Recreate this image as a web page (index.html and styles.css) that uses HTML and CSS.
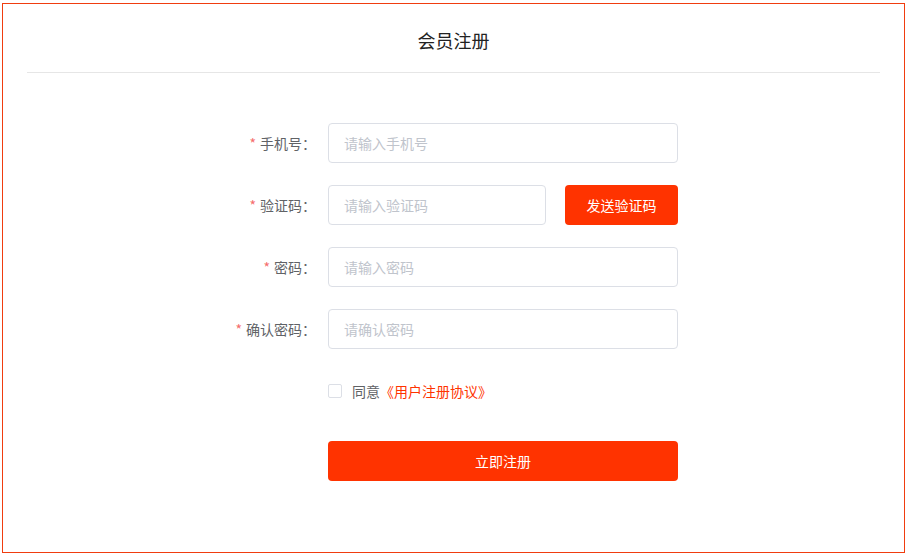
FILE: index.html
```html
<!DOCTYPE html>
<html lang="zh-CN">
<head>
  <meta charset="UTF-8">
  <title>会员注册</title>
  <link rel="stylesheet" href="styles.css">
</head>
<body>

  <div class="register-box">
    <div class="register-head">
      <h2>会员注册</h2>
    </div>

    <form class="reg-form" id="regForm">
      <div class="form-item">
        <label class="form-label required" for="phone">手机号：</label>
        <div class="form-content">
          <input class="form-input" type="text" id="phone" placeholder="请输入手机号">
        </div>
      </div>

      <div class="form-item">
        <label class="form-label required" for="code">验证码：</label>
        <div class="form-content code-row">
          <input class="form-input code-input" type="text" id="code" placeholder="请输入验证码">
          <button type="button" class="btn btn-code">发送验证码</button>
        </div>
      </div>

      <div class="form-item">
        <label class="form-label required" for="password">密码：</label>
        <div class="form-content">
          <input class="form-input" type="password" id="password" placeholder="请输入密码">
        </div>
      </div>

      <div class="form-item">
        <label class="form-label required" for="password2">确认密码：</label>
        <div class="form-content">
          <input class="form-input" type="password" id="password2" placeholder="请确认密码">
        </div>
      </div>

      <div class="form-item agree-item">
        <div class="form-label"></div>
        <div class="form-content">
          <label class="checkbox">
            <span class="checkbox-box"></span>
            <span class="checkbox-text">同意<a href="#" class="agree-link">《用户注册协议》</a></span>
          </label>
        </div>
      </div>

      <div class="form-item">
        <div class="form-label"></div>
        <div class="form-content">
          <button type="submit" class="btn btn-submit">立即注册</button>
        </div>
      </div>
    </form>
  </div>

</body>
</html>
```

FILE: styles.css
```css
body {
  margin: 0;
  padding: 3px 0 0 2px;
  font-family: "Noto Sans CJK SC", "Noto Sans", sans-serif;
  background: #fff;
}

.register-box {
  width: 901px;
  height: 548px;
  border: 1px solid #f03d0f;
  background: #fff;
}

.register-head {
  margin: 0 24px 0 24px;
  height: 68px;
  border-bottom: 1px solid #e6e6e6;
  display: flex;
  align-items: center;
  justify-content: center;
}

.register-head h2 {
  margin: 4px 0 0;
  font-size: 18px;
  font-weight: normal;
  color: #222;
}

.reg-form {
  width: 462px;
  margin: 50px 0 0 213px;
}

.form-item {
  display: flex;
  margin-bottom: 22px;
}

.agree-item {
  margin-bottom: 30px;
}

.form-label {
  width: 112px;
  flex-shrink: 0;
  padding-right: 12px;
  box-sizing: border-box;
  text-align: right;
  font-size: 14px;
  line-height: 40px;
  color: #606266;
}

.form-label.required::before {
  content: "*";
  color: #f56c6c;
  margin-right: 4px;
}

.form-content {
  flex: 1;
  display: flex;
  align-items: center;
  min-height: 40px;
}

.form-input {
  width: 100%;
  height: 40px;
  padding: 0 15px;
  box-sizing: border-box;
  border: 1px solid #dcdfe6;
  border-radius: 4px;
  font-family: inherit;
  font-size: 14px;
  color: #606266;
  outline: none;
}

.form-input::placeholder {
  color: #c0c4cc;
}

.code-row {
  gap: 19px;
}

.code-input {
  width: 218px;
  flex-shrink: 0;
}

.btn {
  height: 40px;
  border: none;
  border-radius: 4px;
  background: #ff3300;
  color: #fff;
  font-family: inherit;
  font-size: 14px;
  cursor: pointer;
}

.btn-code {
  width: 113px;
}

.btn-submit {
  width: 100%;
}

.checkbox {
  display: flex;
  align-items: center;
  font-size: 14px;
  color: #606266;
  cursor: pointer;
  margin-top: -1px;
}

.checkbox-box {
  width: 14px;
  height: 14px;
  box-sizing: border-box;
  border: 1px solid #dcdfe6;
  border-radius: 2px;
  background: #fff;
}

.checkbox-text {
  padding-left: 10px;
}

.agree-link {
  color: #ff3300;
  text-decoration: none;
}
```
